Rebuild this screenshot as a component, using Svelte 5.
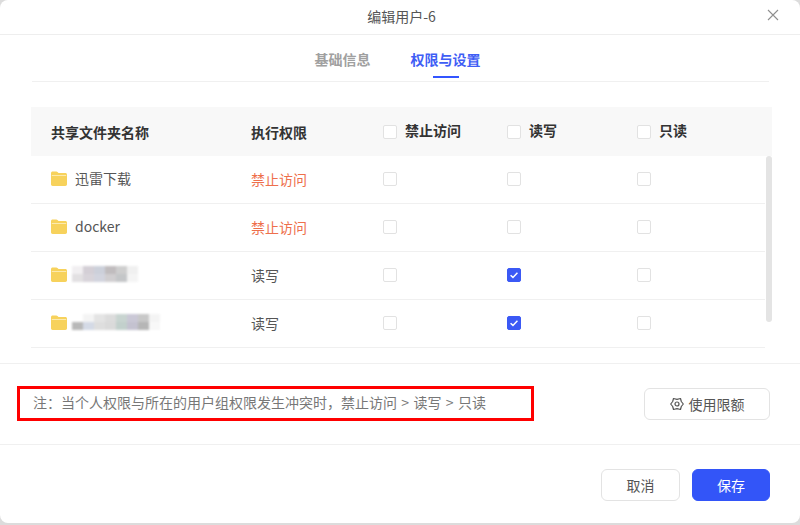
<script>
  const columns = ["禁止访问", "读写", "只读"];
  const folders = [
    { name: "迅雷下载", perm: "禁止访问", denied: true, checked: -1 },
    { name: "docker", perm: "禁止访问", denied: true, checked: -1 },
    {
      blur: ["#f1eff1", "#e2e0e2", "#d4cfd6", "#d8d4da", "#ccd0da", "#d2d4de", "#c0bcbe", "#d0ced0", "#cecece", "#c4c6c8", "#f0f0f0", "#f4f4f4"],
      perm: "读写",
      checked: 1
    },
    {
      blur: ["#ffffff", "#b8b8b8", "#f4f4f4", "#d4dae6", "#e4e4e4", "#dedede", "#dcdcdc", "#dadada", "#c8d4d0", "#c2d0cc", "#cac8d6", "#c4c2d0", "#c8c8c8", "#b6b6b6", "#f4f4f4", "#f8f8f8"],
      perm: "读写",
      checked: 1
    }
  ];
</script>

<div class="page">
  <div class="modal">
    <header class="head">
      <span class="title">编辑用户-6</span>
      <svg class="close" width="12" height="12" viewBox="0 0 12 12">
        <path d="M1 1l10 10M11 1L1 11" stroke="#8f8f8f" stroke-width="1.1" fill="none" />
      </svg>
    </header>

    <nav class="tabs">
      <span class="tab">基础信息</span>
      <span class="tab active">权限与设置</span>
    </nav>

    <div class="table">
      <div class="row th">
        <div class="name">共享文件夹名称</div>
        <div>执行权限</div>
        {#each columns as col}
          <div class="check-head"><span class="box"></span>{col}</div>
        {/each}
      </div>
      {#each folders as f}
        <div class="row">
          <div class="name">
            <svg class="folder" width="16" height="16" viewBox="0 0 16 16">
              <path d="M0 2.200C0 1.200.7.500 1.700.500h3.700c.4 0 .8.200 1.100.5l1 1h6.800c1 0 1.700.7 1.700 1.700v9.600c0 1-.7 1.700-1.700 1.700H1.700c-1 0-1.700-.7-1.700-1.700z" fill="#f7d25c" />
              <path d="M.8 4h14.400v.9H.8z" fill="#fcecb8" />
            </svg>
            {#if f.blur}
              <span class="mosaic">
                {#each f.blur as c}<i style="background:{c}"></i>{/each}
              </span>
            {:else}
              <span>{f.name}</span>
            {/if}
          </div>
          <div class="perm" class:denied={f.denied}>{f.perm}</div>
          {#each columns as _, i}
            <div class="cell">
              {#if f.checked === i}
                <span class="box on">
                  <svg width="14" height="14" viewBox="0 0 14 14"><path d="M3 7.200l2.800 2.600L11 4.400" stroke="#fff" stroke-width="1.700" fill="none" /></svg>
                </span>
              {:else}
                <span class="box"></span>
              {/if}
            </div>
          {/each}
        </div>
      {/each}
      <div class="scrollbar"></div>
    </div>

    <section class="notes">
      <p class="note">注：当个人权限与所在的用户组权限发生冲突时，禁止访问 &gt; 读写 &gt; 只读</p>
      <button class="btn quota">
        <svg width="14" height="14" viewBox="0 0 14 14" fill="none" stroke="#555" stroke-width="1.200">
          <path d="M13.300 7L11.300 4.500 10.500 1.500 7 2.300 3.500 1.500 2.700 4.500.7 7 2.700 9.500 3.500 12.500 7 11.700 10.500 12.500 11.300 9.500z" stroke-linejoin="round" />
          <circle cx="7" cy="7" r="2" />
        </svg>
        使用限额
      </button>
    </section>

    <footer class="foot">
      <button class="btn cancel">取消</button>
      <button class="btn save">保存</button>
    </footer>
  </div>
</div>

<style>
  :global(body) {
    margin: 0;
    background: #dcdcdc;
  }
  .page {
    width: 800px;
    height: 525px;
    overflow: hidden;
    font-family: "Noto Sans CJK SC", "Liberation Sans", sans-serif;
    font-size: 14px;
    color: #555;
  }
  .modal {
    width: 800px;
    height: 523px;
    background: #fff;
    border-radius: 8px;
    display: flex;
    flex-direction: column;
  }
  .head {
    height: 34px;
    border-bottom: 1px solid #eeeeee;
    display: flex;
    align-items: center;
    justify-content: center;
    position: relative;
    flex: none;
  }
  .title {
    color: #555;
    font-size: 14px;
    margin: -3px 0 0 3px;
  }
  .close {
    position: absolute;
    right: 21px;
    top: 9px;
  }
  .tabs {
    height: 46px;
    margin: 0 31px 0 32px;
    border-bottom: 1px solid #f0f0f0;
    display: flex;
    justify-content: center;
    gap: 40px;
    flex: none;
    padding-right: 6px;
  }
  .tab {
    font-size: 14px;
    font-weight: 700;
    color: #a0a0a0;
    line-height: 49px;
    position: relative;
  }
  .tab.active {
    color: #3f5ef5;
  }
  .tab.active::after {
    content: "";
    position: absolute;
    left: 22px;
    width: 26px;
    height: 2px;
    bottom: 3px;
    background: #3355ff;
  }
  .table {
    margin: 25px 28px 0 31px;
    position: relative;
    flex: none;
  }
  .row {
    display: grid;
    grid-template-columns: 220px 132px 124px 130px 1fr;
    height: 47px;
    align-items: center;
    border-bottom: 1px solid #f0f0f0;
    margin-right: 7px;
  }
  .row > .name {
    padding-left: 20px;
    display: flex;
    align-items: center;
    gap: 8px;
    margin-top: -4px;
  }
  .folder {
    margin-top: 2px;
  }
  .th {
    height: 49px;
    margin-right: 0;
    background: #f8f8f8;
    border-bottom: none;
    font-weight: 700;
    color: #333;
  }
  .th > .name {
    margin-top: 0;
  }
  .check-head {
    display: flex;
    align-items: center;
    gap: 8px;
    margin-top: -4px;
  }
  .check-head .box {
    margin-top: 5px;
  }
  .perm {
    color: #555;
    margin-top: -2px;
  }
  .perm.denied {
    color: #ee6f4c;
  }
  .cell {
    display: flex;
    align-items: center;
    margin-top: -2px;
  }
  .box {
    width: 14px;
    height: 14px;
    box-sizing: border-box;
    border: 1px solid #e2e2e2;
    border-radius: 2px;
    background: #fff;
    display: inline-flex;
    align-items: center;
    justify-content: center;
    flex: none;
  }
  .box.on {
    background: #3b59f5;
    border-color: #3b59f5;
  }
  .mosaic {
    display: grid;
    grid-template-rows: 8px 8px;
    grid-auto-flow: column;
    grid-auto-columns: 11px;
    margin-left: -3px;
    filter: blur(1.2px);
  }
  .mosaic i {
    display: block;
  }
  .scrollbar {
    position: absolute;
    right: 0;
    top: 49px;
    width: 6px;
    height: 166px;
    border-radius: 3px;
    background: #e4e4e4;
  }
  .notes {
    margin-top: 15px;
    border-top: 1px solid #f0f0f0;
    height: 80px;
    flex: none;
    display: flex;
    align-items: center;
    justify-content: space-between;
    padding: 0 30px 0 17px;
  }
  .note {
    margin: -2px 0 0;
    width: 517px;
    height: 35px;
    box-sizing: border-box;
    border: 3px solid #f00;
    padding-left: 13px;
    font-size: 14px;
    line-height: 27px;
    color: #777;
    word-spacing: 1.2px;
  }
  .btn {
    font-family: inherit;
    font-size: 14px;
    border-radius: 6px;
    border: 1px solid #e3e3e3;
    background: #fff;
    color: #555;
    height: 32px;
    display: inline-flex;
    align-items: center;
    justify-content: center;
    padding: 0;
  }
  .quota {
    width: 126px;
    gap: 5px;
  }
  .foot {
    border-top: 1px solid #f0f0f0;
    flex: 1;
    display: flex;
    justify-content: flex-end;
    gap: 12px;
    padding: 24px 30px 0 0;
  }
  .cancel {
    width: 79px;
  }
  .save {
    width: 78px;
    background: #3355f8;
    border-color: #3355f8;
    color: #fff;
  }
</style>
